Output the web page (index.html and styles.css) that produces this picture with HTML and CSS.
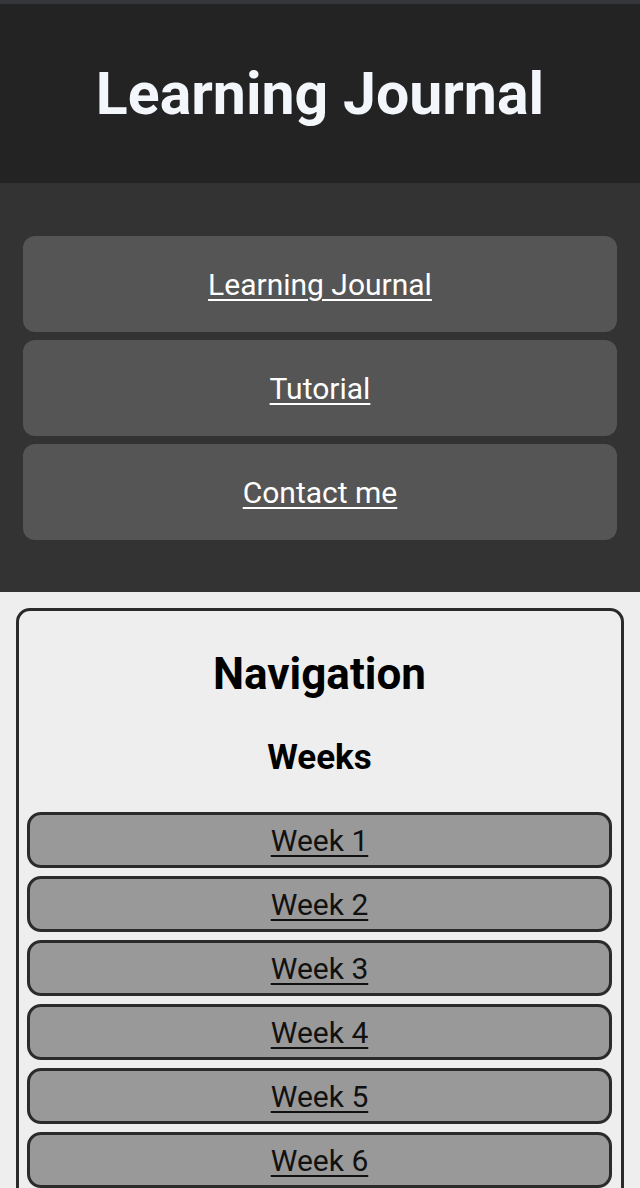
FILE: index.html
```html
<!DOCTYPE html>
<html lang="en">
<head>
<meta charset="utf-8">
<title>Learning Journal</title>
<link rel="stylesheet" href="styles.css">
</head>
<body>
<header class="site-header">
  <h1 class="site-title">Learning Journal</h1>
</header>
<nav class="top-nav">
  <a class="top-link" href="#"><span>Learning Journal</span></a>
  <a class="top-link" href="#"><span>Tutorial</span></a>
  <a class="top-link" href="#"><span>Contact me</span></a>
</nav>
<main class="main">
  <section class="card">
    <h2 class="card-title">Navigation</h2>
    <h3 class="card-sub">Weeks</h3>
    <div class="week-list">
      <a class="week" href="#"><span>Week 1</span></a>
      <a class="week" href="#"><span>Week 2</span></a>
      <a class="week" href="#"><span>Week 3</span></a>
      <a class="week" href="#"><span>Week 4</span></a>
      <a class="week" href="#"><span>Week 5</span></a>
      <a class="week" href="#"><span>Week 6</span></a>
      <a class="week" href="#"><span>Week 7</span></a>
      <a class="week" href="#"><span>Week 8</span></a>
    </div>
  </section>
</main>
</body>
</html>
```
FILE: styles.css
```css
* { box-sizing: border-box; }
html, body {
  margin: 0;
  padding: 0;
  font-family: Roboto, "Liberation Sans", Arial, sans-serif;
  background: #eeeeee;
}
.site-header {
  background: #232323;
  border-top: 4px solid #35353c;
  height: 183px;
  display: flex;
  align-items: center;
  justify-content: center;
}
.site-title {
  margin: 0;
  color: #f3f6fb;
  font-size: 59px;
  font-weight: 700;
  line-height: 1;
}
.top-nav {
  background: #333333;
  padding: 53px 23px 52px;
  display: flex;
  flex-direction: column;
  gap: 8px;
}
.top-link {
  display: flex;
  align-items: center;
  justify-content: center;
  height: 96px;
  background: #555555;
  border-radius: 12px;
  color: #ffffff;
  font-size: 30px;
  text-decoration: underline;
  text-underline-offset: 4px;
  text-decoration-thickness: 2px;
}
.main {
  padding: 16px 16px 24px;
}
.card {
  border: 3px solid #2a2a2a;
  border-radius: 14px;
  padding: 38px 9px 20px 8px;
}
.card-title {
  margin: 0;
  text-align: center;
  font-size: 44px;
  font-weight: 700;
  color: #000;
  line-height: 51px;
}
.card-sub {
  margin: 38px 0 34px;
  text-align: center;
  font-size: 35px;
  font-weight: 700;
  color: #000;
  line-height: 40px;
}
.week-list {
  display: flex;
  flex-direction: column;
  gap: 8px;
}
.week {
  display: flex;
  align-items: center;
  justify-content: center;
  height: 56px;
  background: #999999;
  border: 3px solid #2b2b2b;
  border-radius: 14px;
  color: #111111;
  font-size: 30px;
  text-decoration: underline;
  text-underline-offset: 4px;
  text-decoration-thickness: 2px;
}
```
